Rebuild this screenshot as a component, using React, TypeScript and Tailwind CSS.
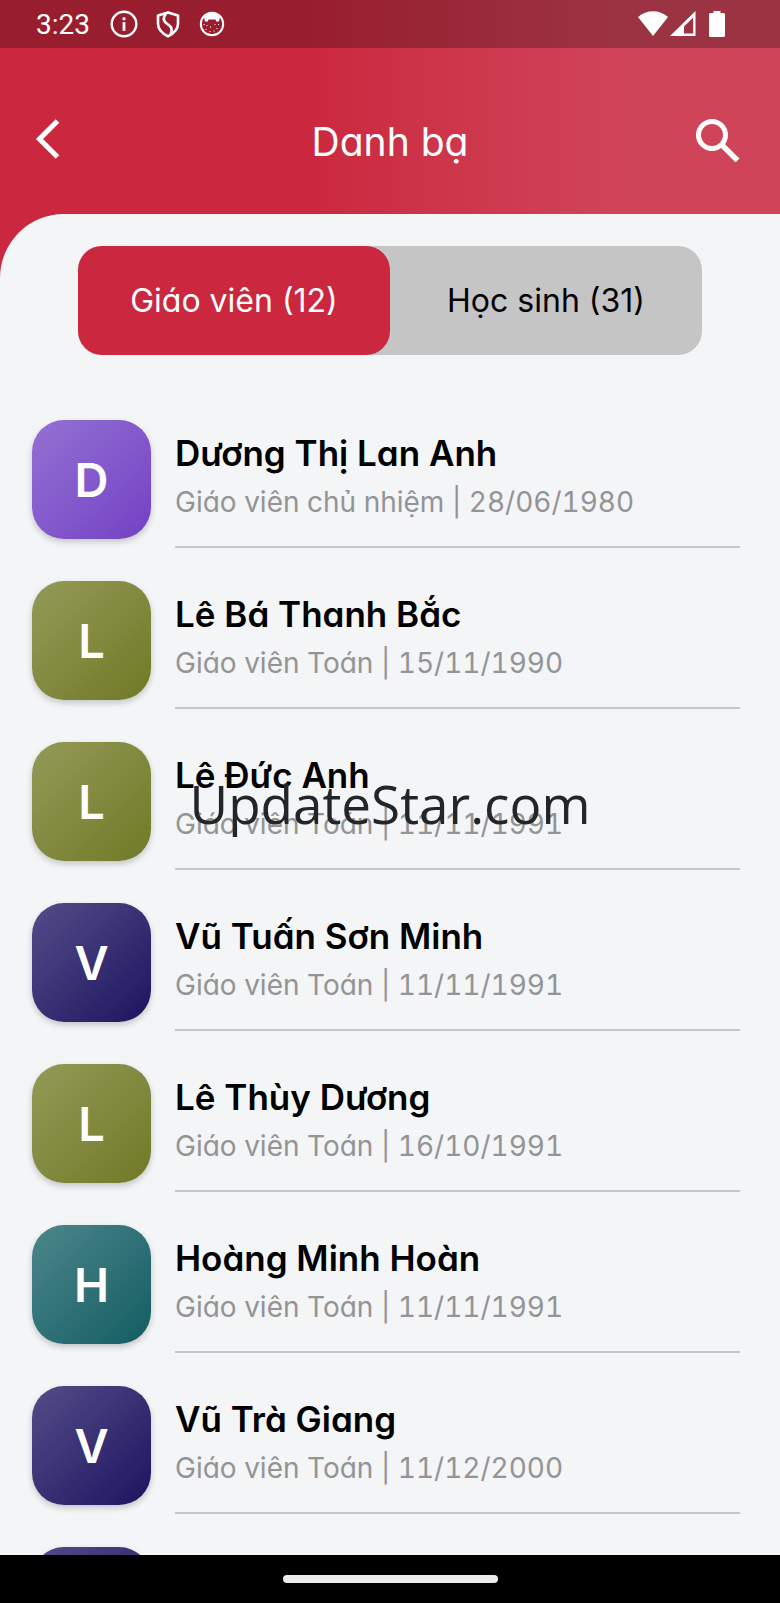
import { useState } from 'react';

interface Contact {
  initial: string;
  name?: string;
  info?: string;
  color: string;
}

const PURPLE = 'from-[#9570d3] to-[#7340c4]';
const OLIVE = 'from-[#939a57] to-[#707a24]';
const NAVY = 'from-[#554c88] to-[#1f125f]';
const TEAL = 'from-[#4a878b] to-[#0f5d62]';

const contacts: Contact[] = [
  { initial: 'D', name: 'Dương Thị Lan Anh', info: 'Giáo viên chủ nhiệm | 28/06/1980', color: PURPLE },
  { initial: 'L', name: 'Lê Bá Thanh Bắc', info: 'Giáo viên Toán | 15/11/1990', color: OLIVE },
  { initial: 'L', name: 'Lê Đức Anh', info: 'Giáo viên Toán | 11/11/1991', color: OLIVE },
  { initial: 'V', name: 'Vũ Tuấn Sơn Minh', info: 'Giáo viên Toán | 11/11/1991', color: NAVY },
  { initial: 'L', name: 'Lê Thùy Dương', info: 'Giáo viên Toán | 16/10/1991', color: OLIVE },
  { initial: 'H', name: 'Hoàng Minh Hoàn', info: 'Giáo viên Toán | 11/11/1991', color: TEAL },
  { initial: 'V', name: 'Vũ Trà Giang', info: 'Giáo viên Toán | 11/12/2000', color: NAVY },
  { initial: '', color: NAVY },
];

const tabs = ['Giáo viên (12)', 'Học sinh (31)'];

function StatusBar() {
  return (
    <div className="flex h-12 items-center justify-between bg-black/25 pl-9 pr-[54px] text-white">
      <div className="flex items-center gap-5">
        <span className="pt-0.5 font-['Roboto',sans-serif] text-[28px] leading-none">3:23</span>
        <div className="flex items-center gap-4">
          <svg width="28" height="28" viewBox="0 0 28 28" fill="none">
            <circle cx="14" cy="14" r="12.3" stroke="currentColor" strokeWidth="2.4" />
            <rect x="12.6" y="7.4" width="2.8" height="2.8" fill="currentColor" />
            <rect x="12.6" y="12.2" width="2.8" height="8.6" fill="currentColor" />
          </svg>
          <svg width="28" height="28" viewBox="0 0 28 28" fill="none" stroke="currentColor" strokeWidth="2.6">
            <path d="M14 2.4 L24 5.6 V13.5 C24 19 20 23.4 14 26.2 C8 23.4 4 19 4 13.5 V5.6 Z" strokeLinejoin="round" />
            <path d="M12 3.4 C8.2 8.6 9.6 11.4 13.4 14 C17.6 17 18.8 19 16.6 24.4" />
          </svg>
          <svg width="28" height="28" viewBox="0 0 28 28" fill="none">
            <circle cx="14" cy="14" r="11.2" stroke="currentColor" strokeWidth="2" />
            <path d="M6 7 C9 1.4 19 1.4 22 7 L21 11.6 L18.2 11.6 L17.6 9.4 H10.4 L9.8 11.6 L7 11.6 Z" fill="currentColor" />
            <path
              d="M6 14v1M9 15v1M12.5 16.5v1M17 14v1M20.5 14v1M19 18v1M8 19v1M12 21v1M16 20.5v1"
              stroke="currentColor"
              strokeWidth="1"
            />
          </svg>
        </div>
      </div>
      <div className="flex items-center">
        <svg width="30" height="26" viewBox="0 0 30 26" fill="currentColor">
          <path d="M0 6 C8.5 -1.8 21.5 -1.8 30 6 L15 25 Z" />
        </svg>
        <svg className="ml-0.5 mr-3" width="26" height="26" viewBox="0 0 26 26">
          <path fillRule="evenodd" d="M25.5 0 V25 H0 Z M23.2 6.5 L14 15.5 V22.5 H23.2 Z" fill="currentColor" />
        </svg>
        <svg width="18" height="26" viewBox="0 0 18 26" fill="currentColor">
          <path d="M5.5 0 H12.5 V2 H15.5 Q17 2 17 3.5 V24.5 Q17 26 15.5 26 H2.5 Q1 26 1 24.5 V3.5 Q1 2 2.5 2 H5.5 Z" />
        </svg>
      </div>
    </div>
  );
}

function ContactRow({ contact }: { contact: Contact }) {
  return (
    <li className="flex h-[161px] shrink-0 items-start gap-6 pl-8 pr-10">
      <div
        className={`flex size-[119px] shrink-0 items-center justify-center rounded-[32px] bg-linear-to-br pt-0.5 text-[47px] font-semibold text-white shadow-[0_3px_6px_rgba(0,0,0,0.2)] ${contact.color}`}
      >
        {contact.initial}
      </div>
      {contact.name && (
        <div className="flex h-32 min-w-0 flex-1 flex-col border-b-2 border-[#c5c6c8] pt-2.5">
          <span className="truncate text-[35px] leading-[46px] font-semibold text-black">{contact.name}</span>
          <span className="truncate text-[28px] leading-[52px] text-[#939496] [font-feature-settings:'cv11','tnum']">
            {contact.info}
          </span>
        </div>
      )}
    </li>
  );
}

export default function App() {
  const [active, setActive] = useState(0);

  return (
    <div className="relative flex h-screen flex-col overflow-hidden bg-[#f3f5f7] font-['Inter','Noto_Sans',sans-serif] [font-feature-settings:'cv11']">
      <div className="bg-linear-to-r from-[#cb283f] from-40% to-[#d04459] to-80%">
        <StatusBar />
        <header className="flex h-[166px] items-center justify-between pl-8 pr-10 pt-4 text-white">
          <button type="button" aria-label="Quay lại" className="flex w-14 justify-start">
            <svg width="30" height="44" viewBox="0 0 30 44" fill="none" stroke="currentColor" strokeWidth="5">
              <path d="M25.5 4 L7.5 22 L25.5 40" />
            </svg>
          </button>
          <h1 className="pt-1 text-[39px] leading-none">Danh bạ</h1>
          <button type="button" aria-label="Tìm kiếm" className="flex w-12 justify-end">
            <svg width="46" height="46" viewBox="0 0 46 46" fill="none" stroke="currentColor">
              <circle cx="18" cy="19" r="13.5" strokeWidth="5" />
              <path d="M28.5 29.5 L43.5 44.5" strokeWidth="5.4" />
            </svg>
          </button>
        </header>
      </div>

      <div className="flex min-h-0 flex-1 flex-col bg-[#cb283f]">
        <main className="flex min-h-0 flex-1 flex-col rounded-tl-[64px] bg-[#f3f5f7] pt-8">
          <div role="tablist" className="mx-[10%] flex rounded-3xl bg-[#c5c5c5]">
            {tabs.map((tab, i) => (
              <button
                key={tab}
                type="button"
                role="tab"
                aria-selected={active === i}
                onClick={() => setActive(i)}
                className={`h-[109px] flex-1 rounded-3xl text-[32px] ${
                  active === i ? 'bg-[#cb283f] text-white' : 'text-black'
                }`}
              >
                {tab}
              </button>
            ))}
          </div>
          <ul className="mt-[53px] flex min-h-0 flex-1 flex-col overflow-hidden pt-3">
            {contacts.map((contact, i) => (
              <ContactRow key={i} contact={contact} />
            ))}
          </ul>
        </main>
      </div>

      <div className="flex h-12 shrink-0 items-center justify-center bg-black">
        <div className="h-2 w-[215px] rounded-full bg-[#ececec]" />
      </div>

      <div className="pointer-events-none absolute inset-0 flex items-center justify-center pt-1">
        <span className="font-['Open_Sans',sans-serif] text-[53px] leading-none text-[#232629]">UpdateStar.com</span>
      </div>
    </div>
  );
}
